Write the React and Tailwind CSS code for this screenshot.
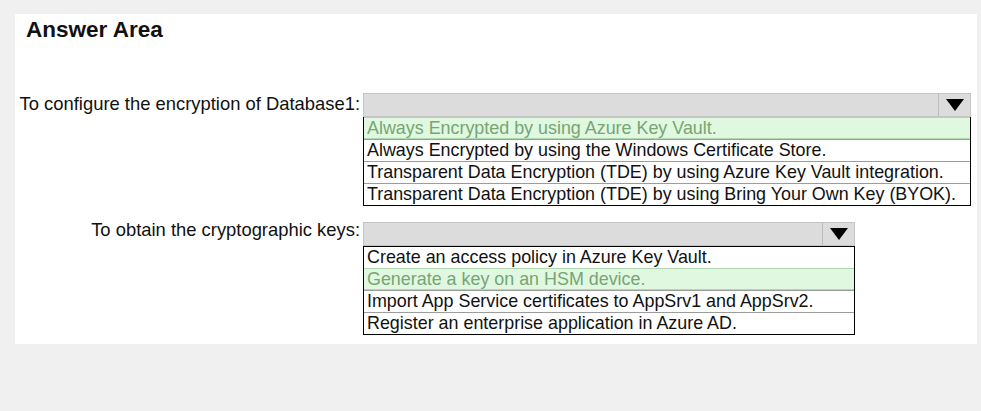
import React from 'react';

const questions = [
  {
    label: 'To configure the encryption of Database1:',
    width: 'w-[608px]',
    labelOffset: '-mt-[1px]',
    options: [
      'Always Encrypted by using Azure Key Vault.',
      'Always Encrypted by using the Windows Certificate Store.',
      'Transparent Data Encryption (TDE) by using Azure Key Vault integration.',
      'Transparent Data Encryption (TDE) by using Bring Your Own Key (BYOK).',
    ],
    selected: 0,
  },
  {
    label: 'To obtain the cryptographic keys:',
    width: 'w-[492px]',
    labelOffset: '-mt-[4px]',
    options: [
      'Create an access policy in Azure Key Vault.',
      'Generate a key on an HSM device.',
      'Import App Service certificates to AppSrv1 and AppSrv2.',
      'Register an enterprise application in Azure AD.',
    ],
    selected: 1,
  },
];

const Dropdown = ({ width, options, selected }) => (
  <div className={width}>
    {/* Header */}
    <div className="flex h-[24px] border border-[#c4c4c4] bg-[#dcdcdc]">
      <div className="flex-1" />
      <div className="flex w-[32px] items-center justify-center border-l border-[#bcbcbc]">
        <svg width="18" height="12" viewBox="0 0 18 12">
          <polygon points="0,0 18,0 9,12" fill="#000" />
        </svg>
      </div>
    </div>
    {/* Options */}
    <div className="border-x border-b border-black">
      {options.map((opt, i) => {
        const isSel = i === selected;
        let cls = 'border-t border-[#9c9c9c] text-[#111]';
        if (isSel) cls = 'border-t border-[#b0d8b0] bg-[#e0f8e0] text-[#76a576] shadow-[inset_0_-1px_0_#b0d8b0]';
        else if (i === 0) cls = 'border-t border-black text-[#111]';
        return (
          <div key={i} className={`h-[22px] pl-[3px] text-[17.9px] leading-[21px] whitespace-nowrap ${cls}`}>
            {opt}
          </div>
        );
      })}
    </div>
  </div>
);

const App = () => {
  return (
    <div
      className="h-[411px] w-[981px] bg-[#f0f0f0] pt-[14px] pl-[15px]"
      style={{ fontFamily: '"Liberation Sans", Arial, sans-serif' }}
    >
      <div className="h-[330px] w-[962px] bg-white">
        <h1 className="pl-[11px] pt-[4px] text-[22.5px] font-bold leading-[24px] text-[#111]">
          Answer Area
        </h1>

        <div className="mt-[51px] flex flex-col gap-[16px]">
          {questions.map((q, i) => (
            <div key={i} className="flex items-start">
              <div
                className={`w-[348px] pr-[3px] text-right text-[18.4px] leading-[24px] whitespace-nowrap text-[#111] ${q.labelOffset}`}
              >
                {q.label}
              </div>
              <Dropdown width={q.width} options={q.options} selected={q.selected} />
            </div>
          ))}
        </div>
      </div>
    </div>
  );
};

export default App;
